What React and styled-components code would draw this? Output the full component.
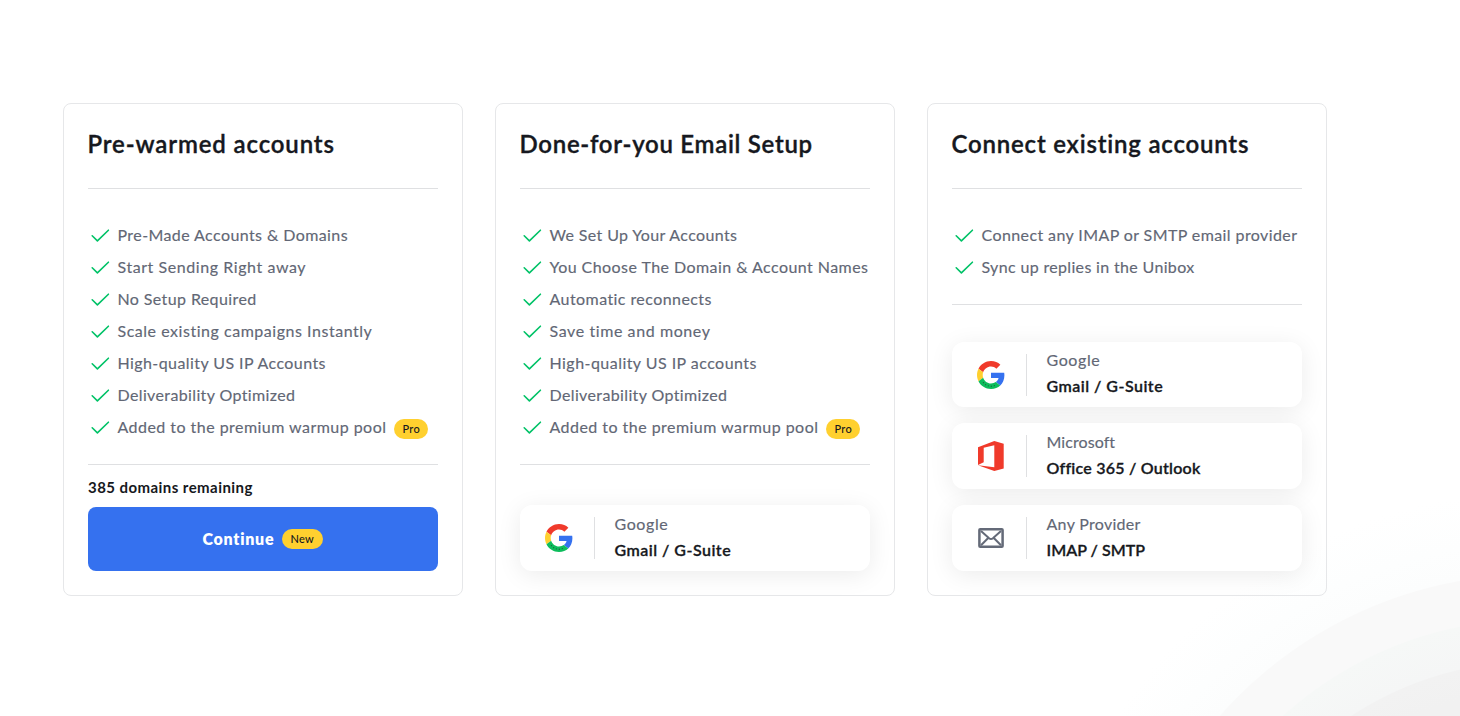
import styled, { createGlobalStyle } from "styled-components";

const preWarmed = [
  { text: "Pre-Made Accounts & Domains", track: 0.41 },
  { text: "Start Sending Right away", track: 0.57 },
  { text: "No Setup Required", track: 0.39 },
  { text: "Scale existing campaigns Instantly", track: 0.53 },
  { text: "High-quality US IP Accounts", track: 0.42 },
  { text: "Deliverability Optimized", track: 0.37 },
  { text: "Added to the premium warmup pool", track: 0.46, badge: "Pro" },
];

const doneForYou = [
  { text: "We Set Up Your Accounts", track: 0.37 },
  { text: "You Choose The Domain & Account Names", track: 0.44 },
  { text: "Automatic reconnects", track: 0.43 },
  { text: "Save time and money", track: 0.59 },
  { text: "High-quality US IP accounts", track: 0.46 },
  { text: "Deliverability Optimized", track: 0.37 },
  { text: "Added to the premium warmup pool", track: 0.46, badge: "Pro" },
];

const existing = [
  { text: "Connect any IMAP or SMTP email provider", track: 0.4 },
  { text: "Sync up replies in the Unibox", track: 0.34 },
];

const CheckIcon = () => (
  <svg width="24" height="24" viewBox="0 0 24 24" fill="none">
    <path
      d="M4.2 11.8L9.4 16.9L20.4 6.2"
      stroke="#00c267"
      strokeWidth="1.6"
      strokeLinecap="round"
      strokeLinejoin="round"
    />
  </svg>
);

const GoogleIcon = () => (
  <svg width="28" height="28" viewBox="0 0 48 48">
    <path
      fill="#f03a2b"
      d="M24 9.5c3.54 0 6.71 1.22 9.21 3.6l6.85-6.85C35.9 2.38 30.47 0 24 0 14.62 0 6.51 5.38 2.56 13.22l7.98 6.19C12.43 13.72 17.74 9.5 24 9.5z"
    />
    <path
      fill="#3571ef"
      d="M46.98 24.55c0-1.57-.15-3.09-.38-4.55H24v9.02h12.94c-.58 2.96-2.26 5.48-4.78 7.18l7.73 6c4.51-4.18 7.09-10.36 7.09-17.65z"
    />
    <path
      fill="#ffd02f"
      d="M10.53 28.59c-.48-1.45-.76-2.99-.76-4.59s.27-3.14.76-4.59l-7.98-6.19C.92 16.46 0 20.12 0 24c0 3.88.92 7.54 2.56 10.78l7.97-6.19z"
    />
    <path
      fill="#0dbd5c"
      d="M24 48c6.48 0 11.93-2.13 15.89-5.81l-7.73-6c-2.15 1.45-4.92 2.3-8.16 2.3-6.26 0-11.57-4.22-13.47-9.91l-7.98 6.19C6.51 42.62 14.62 48 24 48z"
    />
    <path
      d="M10.5 36.5L16 42L24 43.5L33 41.5"
      fill="none"
      stroke="#17643c"
      strokeWidth="2"
      strokeDasharray="1.8 3.4"
    />
  </svg>
);

const OfficeIcon = () => (
  <svg width="28" height="32" viewBox="0 0 28 32">
    <path
      fill="#f03a2b"
      d="M1 7.3L17.3 1L26.7 3.7V28.4L17.3 31L1 25.2L17.3 27.2V5.2L6.7 7.7V22.3L1 25V7.3Z"
    />
  </svg>
);

const MailIcon = () => (
  <svg width="28" height="24" viewBox="0 0 28 24" fill="none">
    <rect x="2.4" y="3.3" width="23.2" height="17.4" rx="0.8" stroke="#646a78" strokeWidth="2.5" />
    <path
      d="M4 5L12.1 12.2Q14 13.8 15.9 12.2L24 5M4 19.3L11.2 12M24 19.3L16.8 12"
      stroke="#646a78"
      strokeWidth="2"
    />
  </svg>
);

const Features = ({ items }) => (
  <FeatureList>
    {items.map((item) => (
      <Feature key={item.text}>
        <CheckIcon />
        <FeatureText $track={item.track}>{item.text}</FeatureText>
        {item.badge ? <Badge>{item.badge}</Badge> : null}
      </Feature>
    ))}
  </FeatureList>
);

const Provider = ({ icon, name, nameTrack, product, productTrack }) => (
  <ProviderCard>
    <ProviderIcon>{icon}</ProviderIcon>
    <ProviderText>
      <ProviderName $track={nameTrack}>{name}</ProviderName>
      <ProviderProduct $track={productTrack}>{product}</ProviderProduct>
    </ProviderText>
  </ProviderCard>
);

const GoogleProvider = () => (
  <Provider
    icon={<GoogleIcon />}
    name="Google"
    nameTrack={0.6}
    product="Gmail / G-Suite"
    productTrack={0.48}
  />
);

const App = () => {
  return (
    <>
      <GlobalStyle />
      <Page>
        <Card>
          <Title $track={0.86}>Pre-warmed accounts</Title>
          <Features items={preWarmed} />
          <Remaining>385 domains remaining</Remaining>
          <ContinueBtn>
            Continue
            <Badge $inButton>New</Badge>
          </ContinueBtn>
        </Card>

        <Card>
          <Title $track={0.71}>Done-for-you Email Setup</Title>
          <Features items={doneForYou} />
          <ProviderList>
            <GoogleProvider />
          </ProviderList>
        </Card>

        <Card>
          <Title $track={0.8}>Connect existing accounts</Title>
          <Features items={existing} />
          <ProviderList>
            <GoogleProvider />
            <Provider
              icon={<OfficeIcon />}
              name="Microsoft"
              nameTrack={0.08}
              product="Office 365 / Outlook"
              productTrack={0.23}
            />
            <Provider
              icon={<MailIcon />}
              name="Any Provider"
              nameTrack={0.3}
              product="IMAP / SMTP"
              productTrack={0.03}
            />
          </ProviderList>
        </Card>
      </Page>
    </>
  );
};

export default App;

const GlobalStyle = createGlobalStyle`
  * {
    box-sizing: border-box;
    margin: 0;
    padding: 0;
  }

  body {
    font-family: Lato, "Liberation Sans", sans-serif;
    color: #161820;
    background: #fff;
    overflow: hidden;
  }

  svg {
    display: block;
    flex-shrink: 0;
  }
`;

const Page = styled.main`
  display: flex;
  align-items: flex-start;
  gap: 32px;
  height: 716px;
  padding: 103px 63px 0;
  background: radial-gradient(
    circle at 1533px 992px,
    #f1f1f1 300px,
    #f2f2f2 330px,
    #f5f6f6 331px,
    #f6f8f7 372px,
    #f9f9f9 373px,
    #f9f9f9 417px,
    #fcfdfd 418px,
    #fdfefe 450px,
    #fff 500px
  );
`;

const Card = styled.section`
  display: flex;
  flex-direction: column;
  flex-shrink: 0;
  width: 400px;
  height: 493px;
  padding: 24px;
  border: 1px solid #e6e7e9;
  border-radius: 8px;
`;

const Title = styled.h2`
  height: 61px;
  border-bottom: 1px solid #dfe0e2;
  font-size: 24px;
  font-weight: 600;
  line-height: 32px;
  letter-spacing: ${({ $track }) => $track}px;
  text-indent: -0.5px;
  white-space: nowrap;
  -webkit-text-stroke: 0.35px currentColor;
`;

const FeatureList = styled.ul`
  padding: 31px 0 20px;
  border-bottom: 1px solid #dfe0e2;
  list-style: none;
`;

const Feature = styled.li`
  display: flex;
  align-items: center;
  height: 32px;
  color: #626775;
  font-size: 16px;
  white-space: nowrap;
`;

const FeatureText = styled.span`
  margin: 0 8px 0 5.5px;
  padding-bottom: 4px;
  letter-spacing: ${({ $track }) => $track}px;
  -webkit-text-stroke: 0.15px currentColor;
`;

const Badge = styled.span`
  height: 20px;
  margin-top: ${({ $inButton }) => ($inButton ? 0 : 2)}px;
  padding: 0 ${({ $inButton }) => ($inButton ? 8.6 : 8)}px;
  border-radius: 10px;
  background: #ffd02f;
  color: #161820;
  font-size: 11px;
  font-weight: 500;
  line-height: ${({ $inButton }) => ($inButton ? 19 : 20)}px;
  letter-spacing: 0.3px;
`;

const Remaining = styled.p`
  margin-top: 13px;
  font-size: 15px;
  font-weight: 700;
  line-height: 19px;
  letter-spacing: 0.44px;
`;

const ContinueBtn = styled.button`
  display: flex;
  align-items: center;
  justify-content: center;
  gap: 7.5px;
  height: 64px;
  margin-top: auto;
  padding-right: 1px;
  border: none;
  border-radius: 8px;
  background: #3571ef;
  color: #fff;
  font-family: inherit;
  font-size: 16px;
  font-weight: 800;
  letter-spacing: 0.75px;
  line-height: 20px;
  cursor: pointer;
`;

const ProviderList = styled.div`
  display: flex;
  flex-direction: column;
  gap: 16px;
  margin-top: auto;
`;

const ProviderCard = styled.div`
  display: flex;
  align-items: center;
  height: 65.8px;
  border-radius: 12px;
  background: #fff;
  box-shadow: 0 4px 24px rgba(0, 0, 0, 0.08);
`;

const ProviderIcon = styled.div`
  display: flex;
  align-items: center;
  justify-content: center;
  width: 75px;
  height: 42px;
  padding-left: 4px;
  border-right: 1px solid #dfe0e2;
`;

const ProviderText = styled.div`
  padding: 0 0 3px 19.5px;
  font-size: 16px;
  line-height: 25.6px;
  white-space: nowrap;
`;

const ProviderName = styled.p`
  color: #626775;
  letter-spacing: ${({ $track }) => $track}px;
  -webkit-text-stroke: 0.15px currentColor;
`;

const ProviderProduct = styled.p`
  font-weight: 600;
  letter-spacing: ${({ $track }) => $track}px;
  -webkit-text-stroke: 0.3px currentColor;
`;
